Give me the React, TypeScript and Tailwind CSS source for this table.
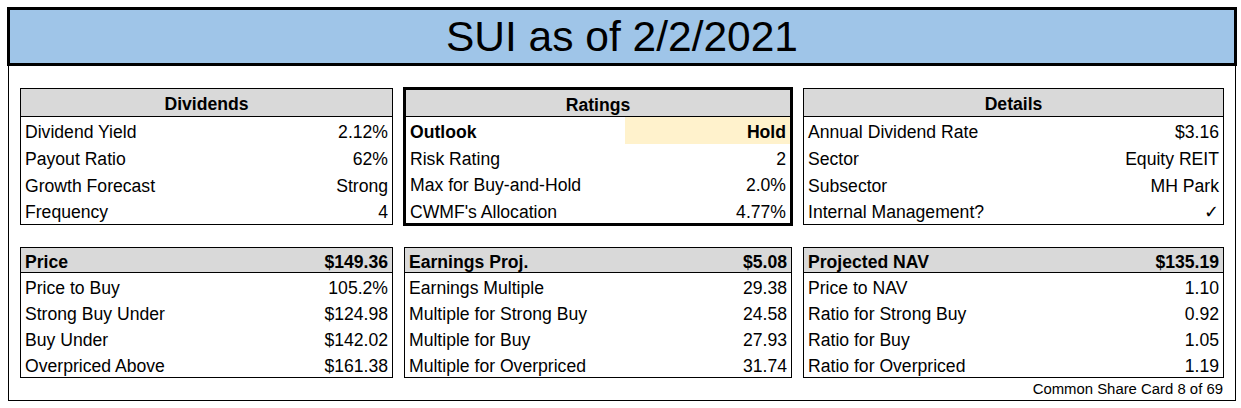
import React from 'react';

type Row = { label: string; value: string };

const dividends: Row[] = [
  { label: 'Dividend Yield', value: '2.12%' },
  { label: 'Payout Ratio', value: '62%' },
  { label: 'Growth Forecast', value: 'Strong' },
  { label: 'Frequency', value: '4' },
];

const ratings: Row[] = [
  { label: 'Risk Rating', value: '2' },
  { label: 'Max for Buy-and-Hold', value: '2.0%' },
  { label: "CWMF's Allocation", value: '4.77%' },
];

const details: Row[] = [
  { label: 'Annual Dividend Rate', value: '$3.16' },
  { label: 'Sector', value: 'Equity REIT' },
  { label: 'Subsector', value: 'MH Park' },
  { label: 'Internal Management?', value: '✓' },
];

const price: Row[] = [
  { label: 'Price to Buy', value: '105.2%' },
  { label: 'Strong Buy Under', value: '$124.98' },
  { label: 'Buy Under', value: '$142.02' },
  { label: 'Overpriced Above', value: '$161.38' },
];

const earnings: Row[] = [
  { label: 'Earnings Multiple', value: '29.38' },
  { label: 'Multiple for Strong Buy', value: '24.58' },
  { label: 'Multiple for Buy', value: '27.93' },
  { label: 'Multiple for Overpriced', value: '31.74' },
];

const nav: Row[] = [
  { label: 'Price to NAV', value: '1.10' },
  { label: 'Ratio for Strong Buy', value: '0.92' },
  { label: 'Ratio for Buy', value: '1.05' },
  { label: 'Ratio for Overpriced', value: '1.19' },
];

const DataRow: React.FC<{ row: Row; h: string }> = ({ row, h }) => (
  <div className={`flex items-center justify-between px-[4px] pt-[4px] ${h}`}>
    <span>{row.label}</span>
    <span>{row.value}</span>
  </div>
);

// tableau du haut avec titre centré
const TopTable: React.FC<{ title: string; rows: Row[] }> = ({ title, rows }) => (
  <div className="border border-black bg-white">
    <div className="flex h-[28px] items-center justify-center border-b border-black bg-[#d9d9d9] pt-[4px] font-bold">
      {title}
    </div>
    {rows.map((r) => (
      <DataRow key={r.label} row={r} h="h-[26.75px]" />
    ))}
  </div>
);

// tableau du bas avec valeur dans l'en-tête
const BottomTable: React.FC<{ title: string; value: string; rows: Row[] }> = ({ title, value, rows }) => (
  <div className="border border-black bg-white">
    <div className="flex h-[25px] items-center justify-between border-b border-black bg-[#d9d9d9] px-[4px] pt-[4px] font-bold">
      <span>{title}</span>
      <span>{value}</span>
    </div>
    {rows.map((r) => (
      <DataRow key={r.label} row={r} h="h-[26px]" />
    ))}
  </div>
);

export default function App() {
  return (
    <div className="min-h-[408px] bg-white pl-[7px] pt-[7px] text-[17.6px] text-black" style={{ fontFamily: '"Liberation Sans", Arial, sans-serif' }}>
      <div className="w-[1230px]">
        <div className="flex h-[59px] items-center justify-center border-[3px] border-black bg-[#9fc5e8] pt-[2px] text-[42.5px] leading-none">
          SUI as of 2/2/2021
        </div>
        <div className="mx-[1px] border-x border-b border-black pl-[11px] pr-[12px] pt-[21px]">
          <div className="grid grid-cols-[373px_390px_421px] items-center gap-x-[10px]">
            <TopTable title="Dividends" rows={dividends} />
            <div className="border-[3px] border-black bg-white">
              <div className="flex h-[27px] items-center justify-center border-b border-black bg-[#d9d9d9] pt-[4px] font-bold">
                Ratings
              </div>
              <div className="flex h-[26.5px] items-stretch font-bold">
                <span className="flex flex-1 items-center pl-[4px] pt-[4px]">Outlook</span>
                <span className="flex w-[165px] items-center justify-end bg-[#fff2cc] pr-[4px] pt-[4px]">Hold</span>
              </div>
              {ratings.map((r) => (
                <DataRow key={r.label} row={r} h="h-[26.5px]" />
              ))}
            </div>
            <TopTable title="Details" rows={details} />
          </div>
          <div className="mt-[21px] grid grid-cols-[373px_390px_421px] gap-x-[10px]">
            <BottomTable title="Price" value="$149.36" rows={price} />
            <div className="px-[1px]">
              <BottomTable title="Earnings Proj." value="$5.08" rows={earnings} />
            </div>
            <BottomTable title="Projected NAV" value="$135.19" rows={nav} />
          </div>
          <div className="flex h-[22px] items-center justify-end text-[14.9px]">
            Common Share Card 8 of 69
          </div>
        </div>
      </div>
    </div>
  );
}
